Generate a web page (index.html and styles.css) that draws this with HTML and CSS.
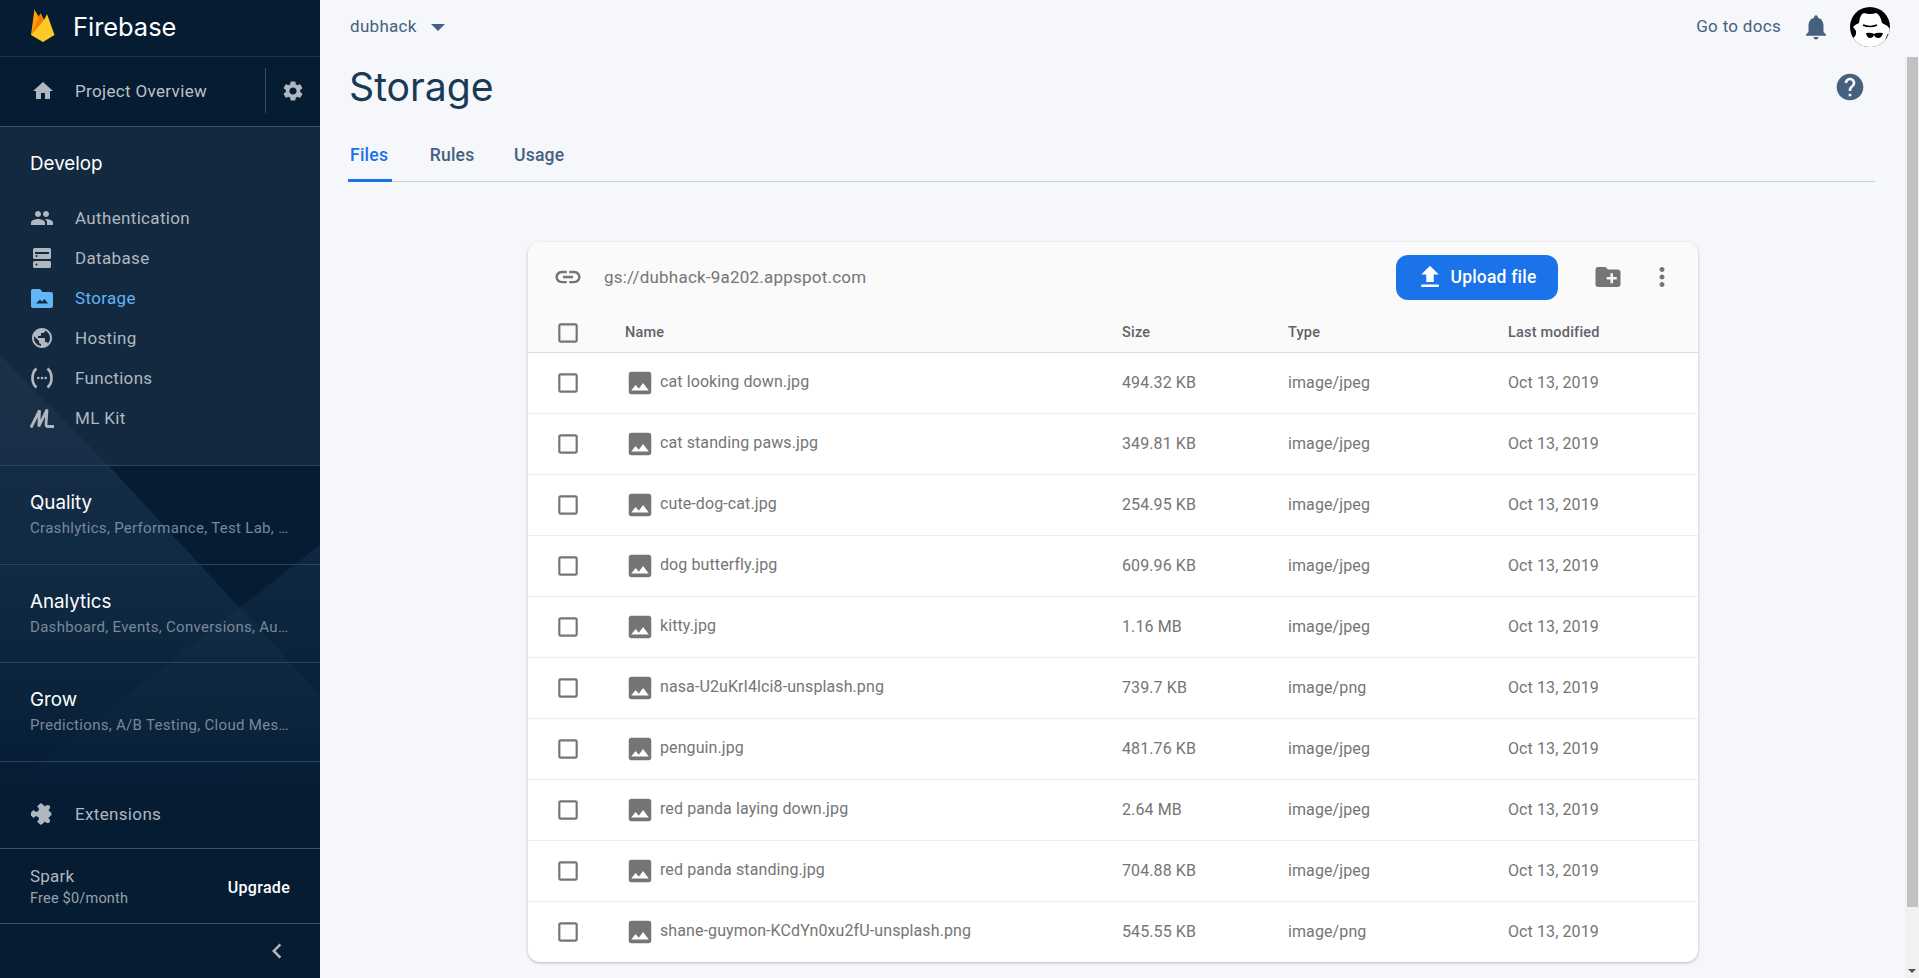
FILE: index.html
```html
<!DOCTYPE html>
<html lang="en">
<head>
<meta charset="utf-8">
<title>Storage - dubhack - Firebase</title>
<link rel="stylesheet" href="styles.css">
</head>
<body>
<svg class="defs" width="0" height="0" aria-hidden="true">
  <symbol id="i-check" viewBox="0 0 24 24"><path d="M19 5v14H5V5h14m0-2H5c-1.100 0-2 .9-2 2v14c0 1.100.9 2 2 2h14c1.100 0 2-.9 2-2V5c0-1.100-.9-2-2-2z"/></symbol>
  <symbol id="i-image" viewBox="0 0 24 24"><path d="M21 19V5c0-1.100-.9-2-2-2H5c-1.100 0-2 .9-2 2v14c0 1.100.9 2 2 2h14c1.100 0 2-.9 2-2zM8.500 13.500l2.500 3.010L14.500 12l4.500 6H5l3.500-4.500z"/></symbol>
</svg>
<aside class="sidebar">
  <svg class="side-bg" viewBox="0 0 320 978" preserveAspectRatio="none" aria-hidden="true">
    <defs>
      <linearGradient id="fade" x1="0" y1="0" x2="0" y2="1">
        <stop offset="0" stop-color="#182d44" stop-opacity="1"/>
        <stop offset="0.5" stop-color="#15304a" stop-opacity=".7"/>
        <stop offset="1" stop-color="#15304a" stop-opacity="0"/>
      </linearGradient>
      <linearGradient id="fade2" x1="0" y1="0" x2="0" y2="1">
        <stop offset="0" stop-color="#16304a" stop-opacity=".6"/>
        <stop offset="1" stop-color="#16304a" stop-opacity="0"/>
      </linearGradient>
    </defs>
    <polygon points="0,355 108,465 320,695 320,800 0,800" fill="url(#fade)"/>
    <polygon points="320,545 0,795 320,795" fill="url(#fade2)"/>
  </svg>
  <div class="brand">
    <svg class="logo" viewBox="0 0 24 34" aria-hidden="true">
      <path d="M0 26 3.400 .5 11 13z" fill="#ffa000"/>
      <path d="M0 26 9.500 4.300 13 11 16 5 23.500 26 12 33z" fill="#ffca28"/>
      <path d="M9.500 4.300 13 11 0 26z" fill="#f57c00"/>
    </svg>
    <span class="brand-name">Firebase</span>
  </div>
  <div class="overview">
    <svg class="nav-icon" viewBox="0 0 24 24" aria-hidden="true"><path d="M10 20v-6h4v6h5v-8h3L12 3 2 12h3v8z"/></svg>
    <span class="overview-label">Project Overview</span>
    <span class="overview-gear">
      <svg class="nav-icon" viewBox="0 0 24 24" aria-hidden="true"><path d="M19.140 12.940c.04-.3.06-.61.06-.94 0-.32-.02-.64-.07-.94l2.030-1.580a.49.49 0 0 0 .12-.61l-1.920-3.320a.488.488 0 0 0-.59-.22l-2.390.96c-.5-.38-1.030-.7-1.620-.94l-.36-2.540a.484.484 0 0 0-.48-.41h-3.840c-.24 0-.43.17-.47.41l-.36 2.540c-.59.24-1.130.57-1.620.94l-2.390-.96c-.22-.08-.47 0-.59.22L2.740 8.870c-.12.21-.08.47.12.61l2.030 1.580c-.05.3-.09.63-.09.94s.02.64.07.94l-2.030 1.580a.49.49 0 0 0-.12.61l1.920 3.320c.12.22.37.29.59.22l2.390-.96c.5.38 1.030.7 1.620.94l.36 2.540c.05.24.24.41.48.41h3.840c.24 0 .44-.17.47-.41l.36-2.540c.59-.24 1.130-.56 1.620-.94l2.390.96c.22.08.47 0 .59-.22l1.920-3.320c.12-.22.07-.47-.12-.61l-2.010-1.580zM12 15.600c-1.980 0-3.600-1.620-3.600-3.600s1.620-3.600 3.600-3.600 3.600 1.620 3.600 3.600-1.620 3.600-3.600 3.600z"/></svg>
    </span>
  </div>
  <section class="develop">
    <h2 class="side-title">Develop</h2>
    <ul class="nav">
      <li class="nav-item"><svg class="nav-icon" viewBox="0 0 24 24" aria-hidden="true"><path d="M16 11c1.660 0 2.990-1.340 2.990-3S17.660 5 16 5c-1.660 0-3 1.340-3 3s1.340 3 3 3zm-8 0c1.660 0 2.990-1.340 2.990-3S9.660 5 8 5C6.340 5 5 6.340 5 8s1.340 3 3 3zm0 2c-2.330 0-7 1.170-7 3.500V19h14v-2.500c0-2.330-4.670-3.500-7-3.500zm8 0c-.29 0-.62.02-.97.05 1.160.84 1.970 1.970 1.970 3.450V19h6v-2.500c0-2.330-4.670-3.500-7-3.500z"/></svg>Authentication</li>
      <li class="nav-item"><svg class="nav-icon" viewBox="0 0 24 24" aria-hidden="true"><path fill-rule="evenodd" d="M4.500 2h15A1.500 1.500 0 0 1 21 3.500v8a1.500 1.500 0 0 1-1.500 1.500h-15A1.500 1.500 0 0 1 3 11.500v-8A1.500 1.500 0 0 1 4.500 2zM5 6v2h14V6zM4.500 15h15a1.500 1.500 0 0 1 1.500 1.500v4a1.500 1.500 0 0 1-1.500 1.500h-15A1.500 1.500 0 0 1 3 20.500v-4A1.500 1.500 0 0 1 4.500 15zM6.500 17.500a1 1 0 1 0 0 2 1 1 0 0 0 0-2zM5.500 10a1 1 0 1 0 2 0 1 1 0 0 0-2 0z"/></svg>Database</li>
      <li class="nav-item nav-item-active"><svg class="nav-icon" viewBox="0 0 24 24" aria-hidden="true"><path fill-rule="evenodd" d="M10 3H3C1.900 3 1 3.900 1 5v15c0 1.100.9 2 2 2h18c1.100 0 2-.9 2-2V8c0-1.100-.9-2-2-2h-8.500zM6 17.500h12L14.500 13 12 15.800 10 13.500z"/></svg>Storage</li>
      <li class="nav-item"><svg class="nav-icon" viewBox="0 0 24 24" aria-hidden="true"><path d="M12 2C6.480 2 2 6.480 2 12s4.480 10 10 10 10-4.480 10-10S17.520 2 12 2zm-1 17.930c-3.950-.49-7-3.850-7-7.930 0-.62.08-1.210.21-1.790L9 15v1c0 1.100.9 2 2 2v1.930zm6.900-2.540c-.26-.81-1-1.390-1.900-1.390h-1v-3c0-.55-.45-1-1-1H8v-2h2c.55 0 1-.45 1-1V7h2c1.100 0 2-.9 2-2v-.41c2.930 1.190 5 4.060 5 7.410 0 2.080-.8 3.970-2.100 5.390z"/></svg>Hosting</li>
      <li class="nav-item"><svg class="nav-icon" viewBox="0 0 24 24" aria-hidden="true"><path d="M6.500 2.500C3.500 5 2.500 8.500 2.500 12s1 7 4 9.500M17.500 2.500C20.500 5 21.500 8.500 21.500 12s-1 7-4 9.500" fill="none" stroke="currentColor" stroke-width="2.700"/><circle cx="8.300" cy="12" r="1.300"/><circle cx="12" cy="12" r="1.300"/><circle cx="15.700" cy="12" r="1.300"/></svg>Functions</li>
      <li class="nav-item"><svg class="nav-icon" viewBox="0 0 24 24" aria-hidden="true"><path d="M1 21.500 9.500 4.500 8.800 20.500 17 3.500 16 18.500Q16 20.500 18 20.500H24" fill="none" stroke="currentColor" stroke-width="2.800"/></svg>ML Kit</li>
    </ul>
  </section>
  <section class="group">
    <h2 class="side-title">Quality</h2>
    <p class="group-sub">Crashlytics, Performance, Test Lab, App Distribution</p>
  </section>
  <section class="group">
    <h2 class="side-title">Analytics</h2>
    <p class="group-sub">Dashboard, Events, Conversions, Audiences</p>
  </section>
  <section class="group">
    <h2 class="side-title">Grow</h2>
    <p class="group-sub">Predictions, A/B Testing, Cloud Messaging</p>
  </section>
  <div class="extensions">
    <svg class="nav-icon" viewBox="0 0 24 24" aria-hidden="true"><g transform="rotate(45 12 12) translate(.6 .6) scale(.95)"><path d="M20.500 11H19V7c0-1.100-.9-2-2-2h-4V3.500C13 2.120 11.880 1 10.500 1S8 2.120 8 3.500V5H4c-1.100 0-1.990.9-1.990 2v3.800H3.500c1.490 0 2.700 1.210 2.700 2.700s-1.210 2.700-2.700 2.700H2V20c0 1.100.9 2 2 2h3.800v-1.500c0-1.490 1.210-2.700 2.700-2.700 1.490 0 2.700 1.210 2.700 2.700V22H17c1.100 0 2-.9 2-2v-4h1.500c1.380 0 2.500-1.120 2.500-2.500S21.880 11 20.500 11z"/></g></svg>Extensions
  </div>
  <div class="plan">
    <div class="plan-info">
      <div class="plan-name">Spark</div>
      <div class="plan-price">Free $0/month</div>
    </div>
    <span class="plan-upgrade">Upgrade</span>
  </div>
  <div class="collapse">
    <svg class="collapse-icon" viewBox="0 0 24 24" aria-hidden="true"><path d="M15.410 7.410 14 6l-6 6 6 6 1.410-1.410L10.830 12z"/></svg>
  </div>
</aside>
<main class="main">
  <header class="topbar">
    <span class="project">dubhack</span>
    <span class="caret"></span>
    <span class="docs">Go to docs</span>
    <svg class="bell" viewBox="0 0 24 24" aria-hidden="true"><path d="M12 22c1.100 0 2-.9 2-2h-4c0 1.100.89 2 2 2zm6-6v-5c0-3.070-1.640-5.640-4.500-6.320V4c0-.83-.67-1.500-1.500-1.500s-1.500.67-1.500 1.500v.68C7.630 5.360 6 7.920 6 11v5l-2 2v1h16v-1l-2-2z"/></svg>
    <svg class="avatar" viewBox="0 0 40 40" aria-hidden="true">
      <defs>
        <clipPath id="av"><circle cx="20" cy="20" r="20"/></clipPath>
      </defs>
      <g clip-path="url(#av)">
        <rect width="40" height="40" fill="#000"/>
        <path d="M9 16Q10 7 14 6 20 8 26 6 30 7 32 16 37 18 40 22V40H0V33Q7 30 6 24 4 21 3 20 6 17 9 16z" fill="#fff"/>
        <path d="M13 18Q20 21 27 18" fill="none" stroke="#000" stroke-width="1.600"/>
        <path d="M16 26Q21 25 24 27 27 25 33 26 32 31 28 31 25 31 24 28 23 31 20 31 17 31 16 26z" fill="#000"/>
        <path d="M38 27 36 32" fill="none" stroke="#333" stroke-width="1"/>
      </g>
    </svg>
  </header>
  <div class="scroll-area">
    <div class="content">
      <div class="title-row">
        <h1 class="page-title">Storage</h1>
        <svg class="help" viewBox="0 0 24 24" aria-hidden="true"><path d="M12 2C6.480 2 2 6.480 2 12s4.480 10 10 10 10-4.480 10-10S17.520 2 12 2zm1 17h-2v-2h2v2zm2.070-7.750-.9.92C13.450 12.900 13 13.500 13 15h-2v-.5c0-1.100.45-2.100 1.170-2.830l1.240-1.260c.37-.36.59-.86.59-1.410 0-1.100-.9-2-2-2s-2 .9-2 2H8c0-2.210 1.790-4 4-4s4 1.790 4 4c0 .88-.36 1.680-.93 2.250z"/></svg>
      </div>
      <nav class="tabs">
        <span class="tab tab-active">Files</span>
        <span class="tab">Rules</span>
        <span class="tab">Usage</span>
      </nav>
      <div class="card">
        <div class="toolbar">
          <svg class="tool-icon link-icon" viewBox="0 0 24 24" aria-hidden="true"><path d="M3.900 12c0-1.710 1.390-3.100 3.100-3.100h4V7H7c-2.760 0-5 2.240-5 5s2.240 5 5 5h4v-1.900H7c-1.710 0-3.100-1.390-3.100-3.100zM8 13h8v-2H8v2zm9-6h-4v1.900h4c1.710 0 3.100 1.390 3.100 3.100s-1.390 3.100-3.100 3.100h-4V17h4c2.760 0 5-2.240 5-5s-2.240-5-5-5z"/></svg>
          <span class="bucket">gs://dubhack-9a202.appspot.com</span>
          <button class="upload" type="button">
            <svg class="upload-icon" viewBox="0 0 24 24" aria-hidden="true"><path d="M5 20h14v-2H5v2zm0-10h4v6h6v-6h4l-7-7-7 7z"/></svg>
            Upload file
          </button>
          <svg class="tool-icon folder-icon" viewBox="0 0 24 24" aria-hidden="true"><path d="M20 6h-8l-2-2H4c-1.110 0-1.990.89-1.990 2L2 18c0 1.110.89 2 2 2h16c1.110 0 2-.89 2-2V8c0-1.110-.89-2-2-2zm-1 8h-3v3h-2v-3h-3v-2h3V9h2v3h3v2z"/></svg>
          <svg class="tool-icon more-icon" viewBox="0 0 24 24" aria-hidden="true"><path d="M12 8c1.100 0 2-.9 2-2s-.9-2-2-2-2 .9-2 2 .9 2 2 2zm0 2c-1.100 0-2 .9-2 2s.9 2 2 2 2-.9 2-2-.9-2-2-2zm0 6c-1.100 0-2 .9-2 2s.9 2 2 2 2-.9 2-2-.9-2-2-2z"/></svg>
        </div>
        <div class="row row-head">
          <svg class="check" aria-hidden="true"><use href="#i-check"/></svg>
          <span>Name</span><span>Size</span><span>Type</span><span>Last modified</span>
        </div>
        <div class="row"><svg class="check" aria-hidden="true"><use href="#i-check"/></svg><span class="name"><svg class="file-icon" aria-hidden="true"><use href="#i-image"/></svg><span class="name-text">cat looking down.jpg</span></span><span>494.32 KB</span><span>image/jpeg</span><span>Oct 13, 2019</span></div>
        <div class="row"><svg class="check" aria-hidden="true"><use href="#i-check"/></svg><span class="name"><svg class="file-icon" aria-hidden="true"><use href="#i-image"/></svg><span class="name-text">cat standing paws.jpg</span></span><span>349.81 KB</span><span>image/jpeg</span><span>Oct 13, 2019</span></div>
        <div class="row"><svg class="check" aria-hidden="true"><use href="#i-check"/></svg><span class="name"><svg class="file-icon" aria-hidden="true"><use href="#i-image"/></svg><span class="name-text">cute-dog-cat.jpg</span></span><span>254.95 KB</span><span>image/jpeg</span><span>Oct 13, 2019</span></div>
        <div class="row"><svg class="check" aria-hidden="true"><use href="#i-check"/></svg><span class="name"><svg class="file-icon" aria-hidden="true"><use href="#i-image"/></svg><span class="name-text">dog butterfly.jpg</span></span><span>609.96 KB</span><span>image/jpeg</span><span>Oct 13, 2019</span></div>
        <div class="row"><svg class="check" aria-hidden="true"><use href="#i-check"/></svg><span class="name"><svg class="file-icon" aria-hidden="true"><use href="#i-image"/></svg><span class="name-text">kitty.jpg</span></span><span>1.16 MB</span><span>image/jpeg</span><span>Oct 13, 2019</span></div>
        <div class="row"><svg class="check" aria-hidden="true"><use href="#i-check"/></svg><span class="name"><svg class="file-icon" aria-hidden="true"><use href="#i-image"/></svg><span class="name-text">nasa-U2uKrI4lci8-unsplash.png</span></span><span>739.7 KB</span><span>image/png</span><span>Oct 13, 2019</span></div>
        <div class="row"><svg class="check" aria-hidden="true"><use href="#i-check"/></svg><span class="name"><svg class="file-icon" aria-hidden="true"><use href="#i-image"/></svg><span class="name-text">penguin.jpg</span></span><span>481.76 KB</span><span>image/jpeg</span><span>Oct 13, 2019</span></div>
        <div class="row"><svg class="check" aria-hidden="true"><use href="#i-check"/></svg><span class="name"><svg class="file-icon" aria-hidden="true"><use href="#i-image"/></svg><span class="name-text">red panda laying down.jpg</span></span><span>2.64 MB</span><span>image/jpeg</span><span>Oct 13, 2019</span></div>
        <div class="row"><svg class="check" aria-hidden="true"><use href="#i-check"/></svg><span class="name"><svg class="file-icon" aria-hidden="true"><use href="#i-image"/></svg><span class="name-text">red panda standing.jpg</span></span><span>704.88 KB</span><span>image/jpeg</span><span>Oct 13, 2019</span></div>
        <div class="row"><svg class="check" aria-hidden="true"><use href="#i-check"/></svg><span class="name"><svg class="file-icon" aria-hidden="true"><use href="#i-image"/></svg><span class="name-text">shane-guymon-KCdYn0xu2fU-unsplash.png</span></span><span>545.55 KB</span><span>image/png</span><span>Oct 13, 2019</span></div>
      </div>
    </div>
    <div class="scrollbar"><div class="thumb"></div><div class="arrow"></div></div>
  </div>
</main>
</body>
</html>
```

FILE: styles.css
```css
* { box-sizing: border-box; }
html, body { height: 100%; }
body {
  margin: 0;
  height: 978px;
  display: flex;
  overflow: hidden;
  background: #f5f7fa;
  font-family: Roboto, "Liberation Sans", sans-serif;
  color: #5f6368;
}
.defs { position: absolute; }

/* Sidebar */
.sidebar {
  position: relative;
  width: 320px;
  height: 978px;
  flex: none;
  display: flex;
  flex-direction: column;
  background: #051c33;
  overflow: hidden;
}
.side-bg { position: absolute; left: 0; top: 0; width: 320px; height: 978px; }
.sidebar > :not(.side-bg) { position: relative; }
.brand {
  height: 57px;
  flex: none;
  display: flex;
  align-items: center;
  padding: 0 0 4px 31px;
  border-bottom: 1px solid #1b3249;
  background: #051c33;
}
.logo { width: 24px; height: 34px; }
.brand-name {
  margin-left: 18px;
  font: 400 25.4px Inter, sans-serif;
  color: #fff;
}
.overview {
  height: 70px;
  flex: none;
  display: flex;
  align-items: center;
  padding: 0 0 2px 31px;
  border-bottom: 1px solid #42505f;
  background: #051c33;
  font-size: 17px;
  letter-spacing: .34px;
  color: #bcc1c7;
}
.nav-icon { width: 24px; height: 24px; fill: currentColor; flex: none; margin-right: 20px; color: #b1b7bf; }
.overview-label { flex: 1; }
.overview-gear {
  width: 55px;
  height: 45px;
  display: flex;
  align-items: center;
  justify-content: center;
  border-left: 1px solid #3a4a5b;
  padding-left: 20px;
}
.develop {
  height: 339px;
  flex: none;
  padding: 25px 0 0 30px;
  border-bottom: 1px solid #28435f;
  background: rgba(28, 50, 72, .62);
}
.side-title {
  margin: 0;
  font: 400 18.8px/24px Inter, sans-serif;
  color: #fff;
}
.nav { list-style: none; margin: 22px 0 0; padding: 0; }
.nav-item {
  height: 40px;
  display: flex;
  align-items: center;
  font-size: 17px;
  letter-spacing: .34px;
  color: #b1b7bf;
}
.nav-item .nav-icon { margin-right: 21px; }
.nav-item-active, .nav-item-active .nav-icon { color: #63b5f6; }
.group {
  height: 98.6px;
  flex: none;
  padding: 25px 30px 0;
  border-bottom: 1px solid #28435f;
}
.group-sub {
  margin: 4px 0 0;
  font-size: 15px;
  line-height: 18px;
  letter-spacing: .3px;
  color: #79889a;
  white-space: nowrap;
  overflow: hidden;
  text-overflow: ellipsis;
}
.extensions {
  height: 87px;
  flex: none;
  display: flex;
  align-items: center;
  padding: 18px 0 0 31px;
  border-bottom: 1px solid #42505f;
  font-size: 17px;
  letter-spacing: .34px;
  color: #b1b7bf;
}
.plan {
  height: 75px;
  flex: none;
  display: flex;
  align-items: center;
  justify-content: space-between;
  padding: 3px 30px 0;
  border-bottom: 1px solid #42505f;
}
.plan-name { font-size: 17px; line-height: 20px; letter-spacing: .2px; color: #b1b7bf; }
.plan-price { font-size: 14.5px; line-height: 20px; letter-spacing: .2px; color: #98a2ad; margin-top: 3px; }
.plan-upgrade { font-size: 16px; font-weight: 500; letter-spacing: .3px; color: #fff; }
.collapse { flex: 1; display: flex; align-items: center; justify-content: flex-end; padding-right: 28px; }
.collapse-icon { width: 30px; height: 30px; fill: #b1b7bf; }

/* Main */
.main { flex: 1; min-width: 0; display: flex; flex-direction: column; }
.topbar {
  height: 57px;
  flex: none;
  display: flex;
  align-items: center;
  padding: 0 29px 4px 30px;
  color: #46617f;
}
.project { font-size: 17px; letter-spacing: .3px; padding-bottom: 2px; }
.caret {
  margin: 2px 0 0 14px;
  border-left: 7px solid transparent;
  border-right: 7px solid transparent;
  border-top: 7px solid #46617f;
}
.docs { margin-left: auto; font-size: 17px; letter-spacing: .3px; padding-bottom: 2px; }
.bell { width: 30px; height: 30px; margin-left: 20px; fill: #46617f; }
.avatar { width: 40px; height: 40px; margin-left: 19px; }
.scroll-area { flex: 1; min-height: 0; display: flex; }
.content { flex: 1; min-width: 0; padding: 0 30px 0 28px; }
.scrollbar { width: 14px; flex: none; background: #f1f1f1; position: relative; padding: 0 1px 0 2px; }
.thumb { height: 850px; background: #c1c1c1; }
.arrow {
  position: absolute;
  left: 3px;
  bottom: 5px;
  border-left: 4px solid transparent;
  border-right: 4px solid transparent;
  border-top: 4px solid #505050;
}
.title-row {
  height: 60px;
  display: flex;
  align-items: center;
  justify-content: space-between;
  padding: 0 9px 0 1px;
}
.page-title {
  margin: 0;
  font: 400 39.2px/48px Inter, sans-serif;
  color: #183a56;
}
.help { width: 32px; height: 32px; fill: #46617f; }
.tabs {
  height: 65px;
  display: flex;
  align-items: flex-end;
  gap: 35.5px;
  border-bottom: 1px solid #c3cfdd;
}
.tab {
  height: 44px;
  padding: 8px 2px 0;
  font-size: 17.6px;
  line-height: 20px;
  font-weight: 500;
  letter-spacing: .2px;
  color: #46617f;
}
.tab-active {
  height: 45px;
  margin-bottom: -1px;
  padding: 8px 4px 0 2px;
  color: #1a73e8;
  border-bottom: 3px solid #1a73e8;
  border-radius: 2px 2px 0 0;
}
.card {
  width: 1170px;
  margin: 60px 0 0 180px;
  background: #fff;
  border-radius: 12px;
  box-shadow: 0 1px 3px rgba(60, 64, 67, .35);
  overflow: hidden;
}
.toolbar {
  height: 71px;
  display: flex;
  align-items: center;
  padding: 0 21px 2px 25px;
  background: #fafafa;
}
.tool-icon { width: 30px; height: 30px; fill: #757575; flex: none; }
.bucket { margin-left: 21px; flex: 1; font-size: 17px; letter-spacing: .22px; color: #757575; }
.upload {
  width: 162px;
  height: 45px;
  margin-top: 2px;
  display: flex;
  align-items: center;
  justify-content: center;
  gap: 6px;
  padding: 0 3px 2px 0;
  border: 0;
  border-radius: 12px;
  background: #1a73e8;
  color: #fff;
  font: 500 17.5px Roboto, sans-serif;
  letter-spacing: .2px;
}
.upload-icon { width: 30px; height: 30px; fill: #fff; }
.folder-icon { margin-left: 35px; }
.more-icon { margin-left: 24px; }
.row {
  height: 61px;
  display: grid;
  grid-template-columns: 97px 497px 166px 220px 1fr;
  align-items: center;
  border-top: 1px solid #eceff1;
  font-size: 16px;
  letter-spacing: .1px;
  color: #757575;
}
.row > span { padding-bottom: 2px; }
.row-head {
  height: 39px;
  background: #fafafa;
  border-top: 0;
  font-size: 14.5px;
  font-weight: 500;
  letter-spacing: .2px;
  color: #5f6368;
}
.row-head > span { padding-bottom: 0; }
.row-head + .row { border-top-color: #dcdcdc; }
.check { width: 26px; height: 26px; margin-left: 27px; fill: #757575; }
.row > .name { display: flex; align-items: center; padding-bottom: 0; }
.file-icon { width: 30px; height: 30px; margin-right: 5px; fill: #757575; flex: none; }
.name-text { padding-bottom: 4px; }
```
